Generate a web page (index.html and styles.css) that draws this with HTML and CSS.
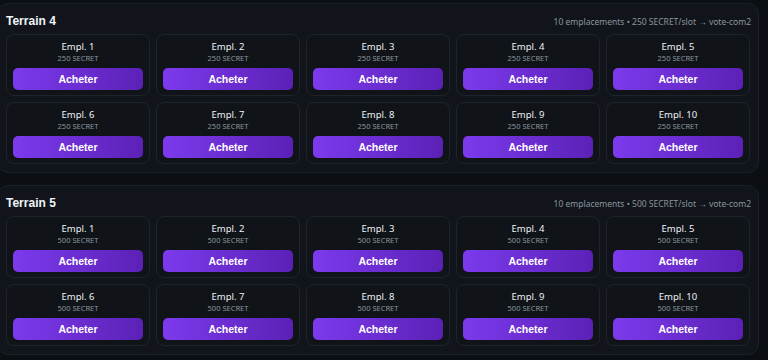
FILE: index.html
```html
<!DOCTYPE html>
<html lang="fr">
<head>
  <meta charset="UTF-8" />
  <meta name="viewport" content="width=device-width, initial-scale=1" />
  <title>Terrains</title>
  <link rel="stylesheet" href="styles.css">
</head>
<body>
  <div class="terrains">

    <section class="terrain">
      <div class="terrain-head">
        <h2>Terrain 4</h2>
        <span class="meta">10 emplacements • 250 SECRET/slot → vote-com2</span>
      </div>
      <div class="slots">
        <div class="slot"><div class="name">Empl. 1</div><div class="price">250 SECRET</div><button>Acheter</button></div>
        <div class="slot"><div class="name">Empl. 2</div><div class="price">250 SECRET</div><button>Acheter</button></div>
        <div class="slot"><div class="name">Empl. 3</div><div class="price">250 SECRET</div><button>Acheter</button></div>
        <div class="slot"><div class="name">Empl. 4</div><div class="price">250 SECRET</div><button>Acheter</button></div>
        <div class="slot"><div class="name">Empl. 5</div><div class="price">250 SECRET</div><button>Acheter</button></div>
        <div class="slot"><div class="name">Empl. 6</div><div class="price">250 SECRET</div><button>Acheter</button></div>
        <div class="slot"><div class="name">Empl. 7</div><div class="price">250 SECRET</div><button>Acheter</button></div>
        <div class="slot"><div class="name">Empl. 8</div><div class="price">250 SECRET</div><button>Acheter</button></div>
        <div class="slot"><div class="name">Empl. 9</div><div class="price">250 SECRET</div><button>Acheter</button></div>
        <div class="slot"><div class="name">Empl. 10</div><div class="price">250 SECRET</div><button>Acheter</button></div>
      </div>
    </section>

    <section class="terrain">
      <div class="terrain-head">
        <h2>Terrain 5</h2>
        <span class="meta">10 emplacements • 500 SECRET/slot → vote-com2</span>
      </div>
      <div class="slots">
        <div class="slot"><div class="name">Empl. 1</div><div class="price">500 SECRET</div><button>Acheter</button></div>
        <div class="slot"><div class="name">Empl. 2</div><div class="price">500 SECRET</div><button>Acheter</button></div>
        <div class="slot"><div class="name">Empl. 3</div><div class="price">500 SECRET</div><button>Acheter</button></div>
        <div class="slot"><div class="name">Empl. 4</div><div class="price">500 SECRET</div><button>Acheter</button></div>
        <div class="slot"><div class="name">Empl. 5</div><div class="price">500 SECRET</div><button>Acheter</button></div>
        <div class="slot"><div class="name">Empl. 6</div><div class="price">500 SECRET</div><button>Acheter</button></div>
        <div class="slot"><div class="name">Empl. 7</div><div class="price">500 SECRET</div><button>Acheter</button></div>
        <div class="slot"><div class="name">Empl. 8</div><div class="price">500 SECRET</div><button>Acheter</button></div>
        <div class="slot"><div class="name">Empl. 9</div><div class="price">500 SECRET</div><button>Acheter</button></div>
        <div class="slot"><div class="name">Empl. 10</div><div class="price">500 SECRET</div><button>Acheter</button></div>
      </div>
    </section>

  </div>
</body>
</html>
```

FILE: styles.css
```css
body {
  margin: 0;
  background: #0b0e13;
  font-family: "Noto Sans", "Open Sans", sans-serif;
  color: #e6edf3;
}

/* liste des terrains */
.terrains {
  display: flex;
  flex-direction: column;
  gap: 12px;
  margin: 3px 9px 0 -3px;
}

.terrain {
  background: #11151b;
  border: 1px solid #1b2028;
  border-radius: 11px;
  padding: 8px;
}

.terrain-head {
  display: flex;
  align-items: center;
  justify-content: space-between;
  height: 18px;
  margin-bottom: 4px;
}

.terrain-head h2 {
  margin: 0;
  font-family: "Liberation Sans", Arial, sans-serif;
  font-size: 12px;
  font-weight: 700;
  color: #f0f4f8;
}

.meta {
  font-size: 8.5px;
  color: #8b949e;
  margin-right: -1px;
}

/* grille des emplacements */
.slots {
  display: grid;
  grid-template-columns: repeat(5, 1fr);
  gap: 6px;
}

.slot {
  background: #101419;
  border: 1px solid #1f242c;
  border-radius: 8px;
  padding: 5px 6px 5px;
  display: flex;
  flex-direction: column;
  align-items: center;
}

.name {
  font-size: 9.5px;
  line-height: 13px;
  color: #eef2f6;
}

.price {
  font-size: 7.5px;
  line-height: 10px;
  color: #8b949e;
  margin-bottom: 5px;
}

.slot button {
  width: 100%;
  height: 22px;
  border: none;
  border-radius: 5px;
  background: linear-gradient(90deg, #7c3aed, #5b21b6);
  color: #fff;
  font-family: "Liberation Sans", Arial, sans-serif;
  font-weight: 700;
  font-size: 10.5px;
  cursor: pointer;
}
```
